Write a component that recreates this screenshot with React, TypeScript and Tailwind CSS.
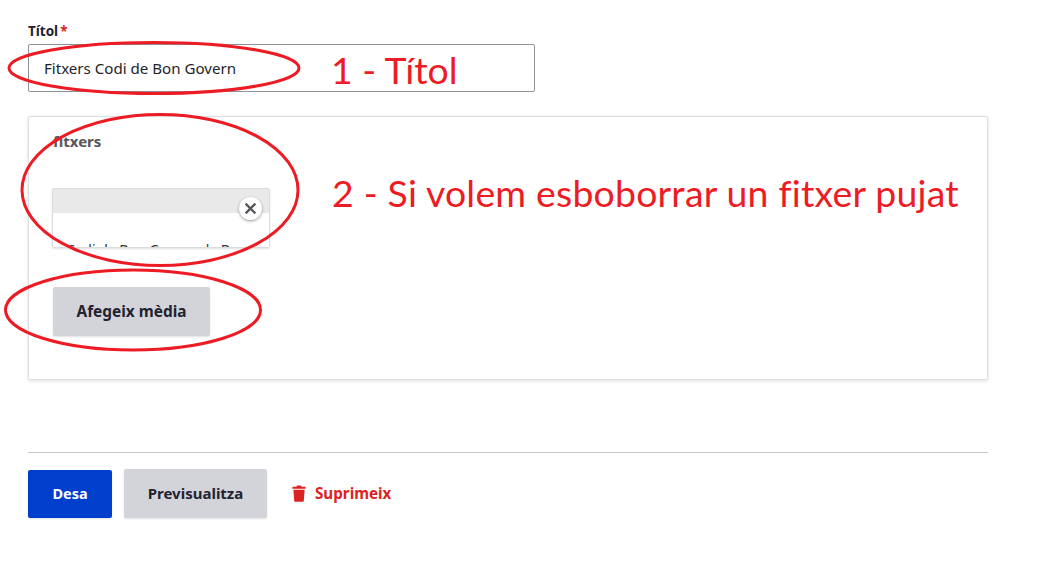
import React from "react";

const Ellipses = () => (
  <svg className="absolute left-0 top-0 pointer-events-none" width="1063" height="582" fill="none" stroke="#ed1c24" strokeWidth="3">
    <ellipse cx="154" cy="68" rx="145" ry="25.5" />
    <ellipse cx="160" cy="190" rx="138" ry="75.5" />
    <ellipse cx="133" cy="310" rx="127.5" ry="40" />
  </svg>
);

export default function App() {
  return (
    <div className="relative w-[1063px] h-[582px] overflow-hidden bg-white font-['Noto_Sans',sans-serif] text-[#222330]">
      <div className="w-[960px] ml-[28px] flex flex-col">
        <label className="mt-[23px] h-[17px] flex items-center text-[13.5px] leading-[17px] font-bold">
          Títol<span className="ml-[2px] text-[#dc2323]">*</span>
        </label>
        <div className="mt-[4px] w-[507px] h-[48px] flex items-center pl-[15px] pt-[1px] border border-[#919297] rounded-[2px] text-[15.1px] text-[#232429]">
          Fitxers Codi de Bon Govern
        </div>

        <section className="mt-[24px] h-[264px] flex flex-col items-start pl-[24px] border border-[#dedfe4] rounded-[2px] shadow-[0_1px_4px_rgba(0,0,0,0.12)]">
          <h2 className="mt-[14px] h-[20px] leading-[20px] text-[15px] font-bold text-[#55565b]">fitxers</h2>
          <div className="relative mt-[37px] -ml-[1px] w-[218px] h-[60px] border border-[#dcdcdc] rounded-[2px] shadow-[0_1px_2px_rgba(0,0,0,0.12)]">
            <div className="h-[24px] bg-[#e9e9e9]" />
            <div className="h-[34px] overflow-hidden pl-[13px] pt-[28px] text-[14px] leading-[18px] whitespace-nowrap text-[#333]">
              Codi de Bon Govern de Bon
            </div>
            <button className="absolute left-[186px] top-[8px] w-[23px] h-[23px] flex items-center justify-center rounded-full bg-white shadow-[0_1px_3px_rgba(0,0,0,0.4)]">
              <svg width="11" height="11" viewBox="0 0 11 11" stroke="#55565b" strokeWidth="2.4" strokeLinecap="square">
                <path d="M1.5 1.5l8 8M9.5 1.5l-8 8" />
              </svg>
            </button>
          </div>
          <button className="mt-[39px] w-[157px] h-[49px] rounded-[2px] bg-[#d3d4d9] text-[15.4px] font-bold shadow-[0_1px_2px_rgba(0,0,0,0.12)]">
            Afegeix mèdia
          </button>
        </section>

        <div className="mt-[72px] h-px bg-[#c8c8cb]" />

        <div className="mt-[16px] flex items-center">
          <button className="w-[84px] h-[48px] rounded-[2px] bg-[#003ecc] text-white text-[14.5px] font-bold shadow-[0_1px_2px_rgba(0,0,0,0.12)]">
            Desa
          </button>
          <button className="ml-[12px] w-[143px] h-[49px] rounded-[2px] bg-[#d3d4d9] text-[15px] font-bold shadow-[0_1px_2px_rgba(0,0,0,0.12)]">
            Previsualitza
          </button>
          <a className="ml-[25px] flex items-center gap-[9px] text-[15.2px] font-bold text-[#dc2323]">
            <svg width="14" height="17" viewBox="0 0 14 17" fill="#dc2323">
              <path d="M5 0.5h4l.6 1.3H13.6v2H.4v-2h4z" />
              <path d="M1.4 4.8h11.2l-.8 11.2c0 .5-.4.8-.9.8H3.1c-.5 0-.9-.3-.9-.8z" />
            </svg>
            Suprimeix
          </a>
        </div>
      </div>

      <Ellipses />
      <span className="absolute left-[331px] top-[46px] font-['Lato',sans-serif] text-[37.4px] leading-[47px] text-[#ed1c24] whitespace-nowrap">
        1 - Títol
      </span>
      <span className="absolute left-[332px] top-[170px] font-['Lato',sans-serif] text-[37.4px] leading-[45px] tracking-[0.21px] [font-variant-ligatures:none] text-[#ed1c24] whitespace-nowrap">
        2 - Si volem esboborrar un fitxer pujat
      </span>
    </div>
  );
}
